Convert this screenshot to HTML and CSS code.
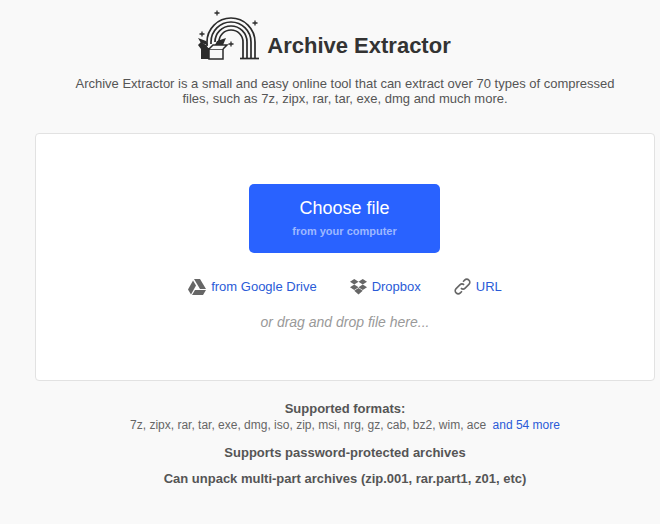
FILE: index.html
```html
<!DOCTYPE html>
<html lang="en">
<head>
  <meta charset="UTF-8" />
  <title>Archive Extractor</title>
  <link rel="stylesheet" href="styles.css">
</head>
<body>
  <header class="brand">
    <svg class="logo" width="64" height="54" viewBox="0 0 64 54" fill="none" stroke="#2b2b2b">
      <!-- rainbow -->
      <g stroke-width="1.700">
        <path d="M9 38V34A24 24 0 0 1 57 34V50.500"/>
        <path d="M13 36V34A20 20 0 0 1 53 34V50.500"/>
        <path d="M17 33V34A16 16 0 0 1 49 34V50.500"/>
        <path d="M21 32V34A12 12 0 0 1 45 34V50.500"/>
        <path d="M42 50.500H61"/>
      </g>
      <!-- box -->
      <path d="M3 39L11 41L25 38V51H3Z" fill="#f9f9f9" stroke="none"/>
      <path d="M3 40H11V51H3Z" fill="#2b2b2b" stroke="none"/>
      <path d="M11 41H25V51H11Z" stroke-width="1.500"/>
      <path d="M11 41L15 37L29 37L25 41" fill="#f9f9f9" stroke-width="1.500"/>
      <path d="M0 37L3 34L8 37L11 41H3Z" fill="#2b2b2b" stroke="none"/>
      <path d="M0 30L8 33L10 37L3 35Z" fill="#2b2b2b" stroke="none"/>
      <path d="M28 30L19 33L17 37L25 37Z" fill="#2b2b2b" stroke="none"/>
      <!-- sparkles -->
      <g stroke-width="1.300">
        <path d="M19 2.500V7.500M16.500 5H21.500"/>
        <path d="M57 12.500V17.500M54.500 15H59.500"/>
        <path d="M4 23.500V28.500M1.500 26H6.500"/>
        <path d="M33 33.500V38.500M30.500 36H35.500"/>
      </g>
    </svg>
    <h1 class="brand-title">Archive Extractor</h1>
  </header>

  <div class="content">
    <p class="intro">Archive Extractor is a small and easy online tool that can extract over 70 types of compressed<br>files, such as 7z, zipx, rar, tar, exe, dmg and much more.</p>

    <main class="drop-card">
      <button class="choose-btn">
        <span class="choose-main">Choose file</span>
        <span class="choose-sub">from your computer</span>
      </button>
      <div class="sources">
        <a class="source" href="#">
          <svg width="18" height="16" viewBox="0 0 18 16" fill="#666">
            <path d="M6 0H12L18 10H12L6 0Z"/>
            <path d="M5 1.500L8 6.500L3 15.500L0 10.500Z"/>
            <path d="M7 11H18L15 16H4Z"/>
          </svg>
          from Google Drive
        </a>
        <a class="source" href="#">
          <svg width="17" height="16" viewBox="0 0 16 15" fill="#666">
            <path d="M4 0L8 2.600L4 5.200L0 2.600Z"/>
            <path d="M12 0L16 2.600L12 5.200L8 2.600Z"/>
            <path d="M4 5.200L8 7.800L4 10.400L0 7.800Z"/>
            <path d="M12 5.200L16 7.800L12 10.400L8 7.800Z"/>
            <path d="M4 11L8 8.500L12 11L8 14.500Z"/>
          </svg>
          Dropbox
        </a>
        <a class="source" href="#">
          <svg width="17" height="17" viewBox="0 0 16 16" fill="none" stroke="#666" stroke-width="1.500">
            <path d="M6.500 9.500C8 11 9.500 10.500 10.500 9.500L14 6C15.200 4.800 15.200 3 14 2C12.800 .8 11.200 .8 10 2L8.500 3.500"/>
            <path d="M9.500 6.500C8 5 6.500 5.500 5.500 6.500L2 10C.8 11.200 .8 13 2 14C3.200 15.200 4.800 15.200 6 14L7.500 12.500"/>
          </svg>
          URL
        </a>
      </div>
      <p class="drag-hint">or drag and drop file here...</p>
    </main>

    <section class="notes">
      <h2 class="note-title">Supported formats:</h2>
      <p class="formats">7z, zipx, rar, tar, exe, dmg, iso, zip, msi, nrg, gz, cab, bz2, wim, ace <a class="more-link" href="#">and 54 more</a></p>
      <p class="note-title note-gap">Supports password-protected archives</p>
      <p class="note-title note-gap-small">Can unpack multi-part archives (zip.001, rar.part1, z01, etc)</p>
    </section>
  </div>
</body>
</html>
```

FILE: styles.css
```css
body {
  margin: 0;
  height: 524px;
  overflow: hidden;
  background: #f9f9f9;
  color: #555;
  font-family: "Liberation Sans", Arial, sans-serif;
}

a {
  color: #2a5bd7;
  text-decoration: none;
}

.brand {
  display: flex;
  align-items: flex-end;
  justify-content: center;
  gap: 5px;
  padding: 8px 11px 0 0;
}

.brand-title {
  margin: 0 0 4px;
  font-size: 22px;
  line-height: 25px;
  font-weight: bold;
  color: #333;
}

.logo {
  flex: none;
}

.content {
  width: 620px;
  margin-left: 35px;
}

.intro {
  margin: 14px 0 0;
  font-size: 13px;
  line-height: 15px;
  text-align: center;
}

.drop-card {
  box-sizing: border-box;
  height: 248px;
  margin-top: 27px;
  padding-top: 50px;
  background: #fff;
  border: 1px solid #e2e2e2;
  border-radius: 4px;
  display: flex;
  flex-direction: column;
  align-items: center;
}

.choose-btn {
  width: 191px;
  height: 69px;
  margin-right: 1px;
  padding: 0 0 3px;
  border: none;
  border-radius: 5px;
  background: #2962ff;
  font-family: inherit;
  display: flex;
  flex-direction: column;
  align-items: center;
  justify-content: center;
  gap: 6px;
}

.choose-main {
  color: #fff;
  font-size: 18px;
}

.choose-sub {
  color: #9db8ff;
  font-size: 11px;
  font-weight: bold;
}

.sources {
  display: flex;
  gap: 33px;
  margin-top: 25px;
  font-size: 13px;
}

.source {
  display: flex;
  align-items: center;
  gap: 5px;
}

.drag-hint {
  margin: 19px 0 0;
  font-size: 14px;
  font-style: italic;
  color: #999;
}

.notes {
  margin-top: 20px;
  text-align: center;
}

.note-title {
  margin: 0;
  font-size: 13px;
  font-weight: bold;
  color: #555;
  line-height: 15px;
}

.formats {
  margin: 2px 0 0;
  font-size: 12px;
  line-height: 15px;
  color: #666;
}

.more-link {
  margin-left: 3px;
}

.note-gap {
  margin-top: 12px;
}

.note-gap-small {
  margin-top: 11px;
}
```
